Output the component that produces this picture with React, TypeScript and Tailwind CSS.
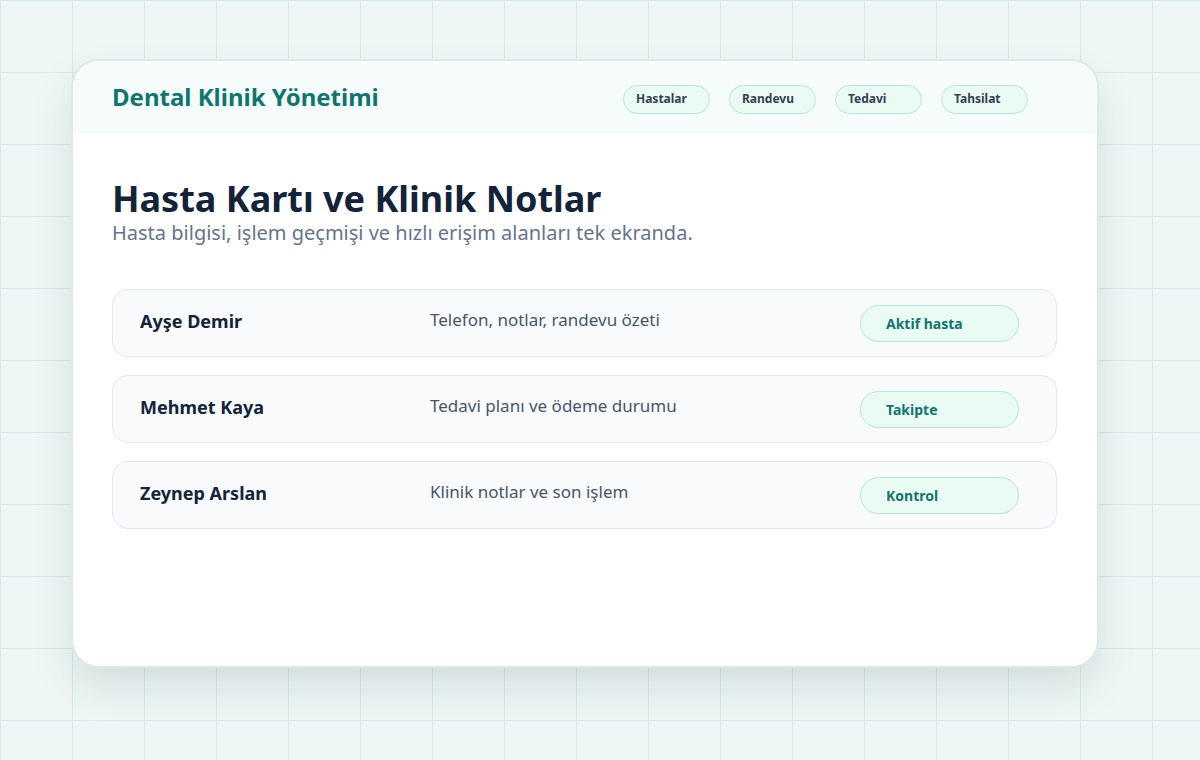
const navItems = ['Hastalar', 'Randevu', 'Tedavi', 'Tahsilat'];

const patients = [
  { name: 'Ayşe Demir', info: 'Telefon, notlar, randevu özeti', status: 'Aktif hasta' },
  { name: 'Mehmet Kaya', info: 'Tedavi planı ve ödeme durumu', status: 'Takipte' },
  { name: 'Zeynep Arslan', info: 'Klinik notlar ve son işlem', status: 'Kontrol' },
];

export default function App() {
  return (
    <div
      className="w-[1200px] h-[760px] bg-[#eef7f6] pt-[59px] pl-[71px] font-['Liberation_Sans',Arial,sans-serif]"
      style={{
        backgroundImage:
          'linear-gradient(to right, #d3ecea 1px, transparent 1px), linear-gradient(to bottom, #d3ecea 1px, transparent 1px)',
        backgroundSize: '72px 72px',
      }}
    >
      <div className="w-[1028px] h-[609px] bg-white rounded-[28px] border-2 border-[#dfe8e8] overflow-hidden shadow-[0_20px_40px_rgba(15,60,60,0.12)]">
        {/* Header */}
        <div className="h-[72px] bg-[#f6fbfb] flex items-center pl-[39px] pr-[69px]">
          <h1 className="text-[24px] font-bold text-[#0f766e] flex-1">Dental Klinik Yönetimi</h1>
          <nav className="flex gap-[19px] mt-[4px]">
            {navItems.map((item) => (
              <span
                key={item}
                className="w-[87px] h-[29px] flex items-center pl-[12px] rounded-full border border-[#b4e6dc] bg-[#eafbf4] text-[12px] font-bold text-[#334155]"
              >
                {item}
              </span>
            ))}
          </nav>
        </div>

        {/* Content */}
        <div className="px-[39px] pt-[46px]">
          <h2 className="text-[36px] leading-[40px] font-bold text-[#13233a]">Hasta Kartı ve Klinik Notlar</h2>
          <p className="text-[20px] leading-[28px] text-[#64748b]">
            Hasta bilgisi, işlem geçmişi ve hızlı erişim alanları tek ekranda.
          </p>

          <div className="mt-[42px] flex flex-col gap-[18px] w-[945px]">
            {patients.map((p) => (
              <div
                key={p.name}
                className="h-[68px] rounded-[16px] border border-[#e2e8f0] bg-[#f8fafc] flex items-start pl-[27px] pr-[37px] pt-[15px]"
              >
                <span className="w-[290px] text-[18px] leading-[32px] font-bold text-[#13233a]">{p.name}</span>
                <span className="flex-1 text-[17px] leading-[30px] text-[#475569]">{p.info}</span>
                <span className="w-[159px] h-[37px] flex items-center pl-[25px] rounded-full border border-[#b4e6dc] bg-[#eafbf4] text-[14px] font-bold text-[#0f766e]">
                  {p.status}
                </span>
              </div>
            ))}
          </div>
        </div>
      </div>
    </div>
  );
}
